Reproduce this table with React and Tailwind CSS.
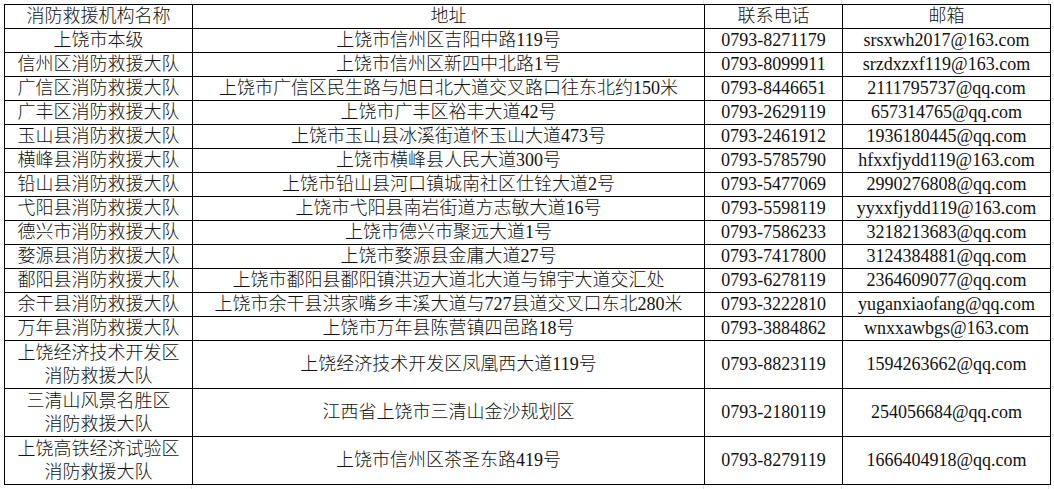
import React from 'react';

const ROWS = [
  { name: ['上饶市本级'], addr: '上饶市信州区吉阳中路119号', tel: '0793-8271179', mail: 'srsxwh2017@163.com' },
  { name: ['信州区消防救援大队'], addr: '上饶市信州区新四中北路1号', tel: '0793-8099911', mail: 'srzdxzxf119@163.com' },
  { name: ['广信区消防救援大队'], addr: '上饶市广信区民生路与旭日北大道交叉路口往东北约150米', tel: '0793-8446651', mail: '2111795737@qq.com' },
  { name: ['广丰区消防救援大队'], addr: '上饶市广丰区裕丰大道42号', tel: '0793-2629119', mail: '657314765@qq.com' },
  { name: ['玉山县消防救援大队'], addr: '上饶市玉山县冰溪街道怀玉山大道473号', tel: '0793-2461912', mail: '1936180445@qq.com' },
  { name: ['横峰县消防救援大队'], addr: '上饶市横峰县人民大道300号', tel: '0793-5785790', mail: 'hfxxfjydd119@163.com' },
  { name: ['铅山县消防救援大队'], addr: '上饶市铅山县河口镇城南社区仕铨大道2号', tel: '0793-5477069', mail: '2990276808@qq.com' },
  { name: ['弋阳县消防救援大队'], addr: '上饶市弋阳县南岩街道方志敏大道16号', tel: '0793-5598119', mail: 'yyxxfjydd119@163.com' },
  { name: ['德兴市消防救援大队'], addr: '上饶市德兴市聚远大道1号', tel: '0793-7586233', mail: '3218213683@qq.com' },
  { name: ['婺源县消防救援大队'], addr: '上饶市婺源县金庸大道27号', tel: '0793-7417800', mail: '3124384881@qq.com' },
  { name: ['鄱阳县消防救援大队'], addr: '上饶市鄱阳县鄱阳镇洪迈大道北大道与锦宇大道交汇处', tel: '0793-6278119', mail: '2364609077@qq.com' },
  { name: ['余干县消防救援大队'], addr: '上饶市余干县洪家嘴乡丰溪大道与727县道交叉口东北280米', tel: '0793-3222810', mail: 'yuganxiaofang@qq.com' },
  { name: ['万年县消防救援大队'], addr: '上饶市万年县陈营镇四邑路18号', tel: '0793-3884862', mail: 'wnxxawbgs@163.com' },
  { name: ['上饶经济技术开发区', '消防救援大队'], addr: '上饶经济技术开发区凤凰西大道119号', tel: '0793-8823119', mail: '1594263662@qq.com' },
  { name: ['三清山风景名胜区', '消防救援大队'], addr: '江西省上饶市三清山金沙规划区', tel: '0793-2180119', mail: '254056684@qq.com' },
  { name: ['上饶高铁经济试验区', '消防救援大队'], addr: '上饶市信州区茶圣东路419号', tel: '0793-8279119', mail: '1666404918@qq.com' },
];

// faint spreadsheet gridlines peeking out above / below the table
function GridStrip() {
  return (
    <div className="flex h-[4px]">
      <div className="w-[192px] border-r border-[#e2e2e2]" />
      <div className="w-[512px] border-r border-[#e2e2e2]" />
      <div className="w-[138px] border-r border-[#e2e2e2]" />
      <div className="w-[207px] border-r border-[#e2e2e2]" />
    </div>
  );
}

const cell = 'border border-black p-0 text-center align-middle whitespace-nowrap font-light';

export default function App() {
  return (
    <div
      className="w-[1054px] h-[489px] bg-white text-[#111] text-[18px] leading-[23px] overflow-hidden"
      style={{ fontFamily: '"Liberation Serif", "Noto Sans CJK SC", serif' }}
    >
      <GridStrip />
      <table className="ml-[4px] border-collapse table-fixed w-[1046px]">
        <colgroup>
          <col className="w-[188px]" />
          <col className="w-[512px]" />
          <col className="w-[138px]" />
          <col className="w-[208px]" />
        </colgroup>
        <thead>
          <tr className="h-[24px]">
            <th className={cell}>消防救援机构名称</th>
            <th className={cell}>地址</th>
            <th className={cell}>联系电话</th>
            <th className={cell}>邮箱</th>
          </tr>
        </thead>
        <tbody>
          {ROWS.map((r) => (
            <tr key={r.tel} className={r.name.length > 1 ? 'h-[48px]' : 'h-[24px]'}>
              <td className={cell}>
                {r.name.map((n) => (
                  <div key={n}>{n}</div>
                ))}
              </td>
              <td className={cell}>{r.addr}</td>
              <td className={cell}>{r.tel}</td>
              <td className={cell}>{r.mail}</td>
            </tr>
          ))}
        </tbody>
      </table>
      <GridStrip />
    </div>
  );
}
